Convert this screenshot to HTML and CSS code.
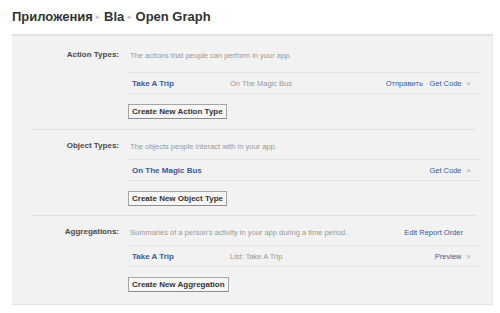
FILE: index.html
```html
<!DOCTYPE html>
<html lang="ru">
  <head>
    <meta charset="UTF-8" />
    <title>Open Graph</title>
    <link rel="stylesheet" href="styles.css">
  </head>
  <body>
    <h1 class="crumbs">
      Приложения <span class="crumb-sep">▸</span> Bla <span class="crumb-sep">▸</span> Open Graph
    </h1>

    <div class="og-panel">
      <div class="og-section">
        <div class="og-label">Action Types:</div>
        <div class="og-body">
          <div class="og-desc">
            <span>The actions that people can perform in your app.</span>
          </div>
          <div class="og-row">
            <a class="og-name" href="#">Take A Trip</a>
            <span class="og-sub">On The Magic Bus</span>
            <span class="og-actions">
              <a class="og-link" href="#">Отправить</a><span class="og-dot">·</span><a class="og-link" href="#">Get Code</a>
              <span class="og-close">×</span>
            </span>
          </div>
          <button class="og-btn">Create New Action Type</button>
        </div>
      </div>

      <div class="og-section">
        <div class="og-label">Object Types:</div>
        <div class="og-body">
          <div class="og-desc">
            <span>The objects people interact with in your app.</span>
          </div>
          <div class="og-row">
            <a class="og-name" href="#">On The Magic Bus</a>
            <span class="og-sub"></span>
            <span class="og-actions">
              <a class="og-link" href="#">Get Code</a>
              <span class="og-close">×</span>
            </span>
          </div>
          <button class="og-btn">Create New Object Type</button>
        </div>
      </div>

      <div class="og-section">
        <div class="og-label">Aggregations:</div>
        <div class="og-body">
          <div class="og-desc">
            <span>Summaries of a person's activity in your app during a time period.</span>
            <a class="og-link" href="#">Edit Report Order</a>
          </div>
          <div class="og-row">
            <a class="og-name" href="#">Take A Trip</a>
            <span class="og-sub">List: Take A Trip</span>
            <span class="og-actions">
              <a class="og-link" href="#">Preview</a>
              <span class="og-close">×</span>
            </span>
          </div>
          <button class="og-btn">Create New Aggregation</button>
        </div>
      </div>
    </div>
  </body>
</html>
```

FILE: styles.css
```css
:root {
  --link: #3b5998;
  --text: #333;
  --muted: #999;
  --panel: #f2f2f2;
  --line: #e3e3e3;
}

body {
  margin: 0;
  padding: 0 7px 0 12px;
  background: #fff;
  color: var(--text);
  font-family: "Liberation Sans", Arial, sans-serif;
  font-size: 7.5px;
}

a,
a:visited,
.og-link {
  color: var(--link);
  text-decoration: none;
}

.crumbs {
  margin: 0;
  padding-top: 9px;
  height: 34px;
  box-sizing: border-box;
  font-size: 13px;
  font-weight: bold;
  color: #333;
}

.crumb-sep {
  font-size: 7px;
  color: #c4c4c4;
  vertical-align: 2px;
}

.og-panel {
  background: var(--panel);
  border-top: 2px solid #e2e2e2;
  border-right: 1px solid #e8e8e8;
  border-bottom: 1px solid #e2e2e2;
}

.og-section {
  display: grid;
  grid-template-columns: 87px 1fr;
  column-gap: 9px;
  padding: 9px 0;
  margin: 0 16px 0 20px;
  border-top: 1px solid #e0e0e0;
}

.og-section:first-child {
  border-top: 0;
  padding-top: 12px;
  padding-bottom: 10px;
}

.og-section:last-child {
  padding-bottom: 12px;
}

.og-section:first-child .og-desc {
  margin-bottom: 10px;
}

.og-label {
  text-align: right;
  font-size: 8px;
  font-weight: bold;
  color: #4a4a4a;
  line-height: 14px;
}

.og-desc {
  display: flex;
  justify-content: space-between;
  align-items: center;
  height: 14px;
  color: var(--muted);
  padding: 0 16px 0 2px;
  margin: 0 -3px 6px 0;
}

.og-row {
  display: flex;
  align-items: center;
  height: 20px;
  border-top: 1px solid var(--line);
  border-bottom: 1px solid var(--line);
  padding: 0 8px 0 4px;
  margin-right: -3px;
}

.og-name {
  width: 98px;
  font-size: 8px;
  font-weight: bold;
}

.og-sub {
  flex: 1;
  color: var(--muted);
}

.og-actions {
  color: #aaa;
}

.og-dot {
  margin: 0 2px;
}

.og-close {
  margin-left: 3px;
}

.og-btn {
  display: block;
  margin-top: 10px;
  height: 15px;
  padding: 0 3px;
  font-family: inherit;
  font-size: 8px;
  font-weight: bold;
  color: #333;
  background: #f7f7f7;
  border: 1px solid #a5a5a5;
  border-bottom-color: #8d8d8d;
}
```
